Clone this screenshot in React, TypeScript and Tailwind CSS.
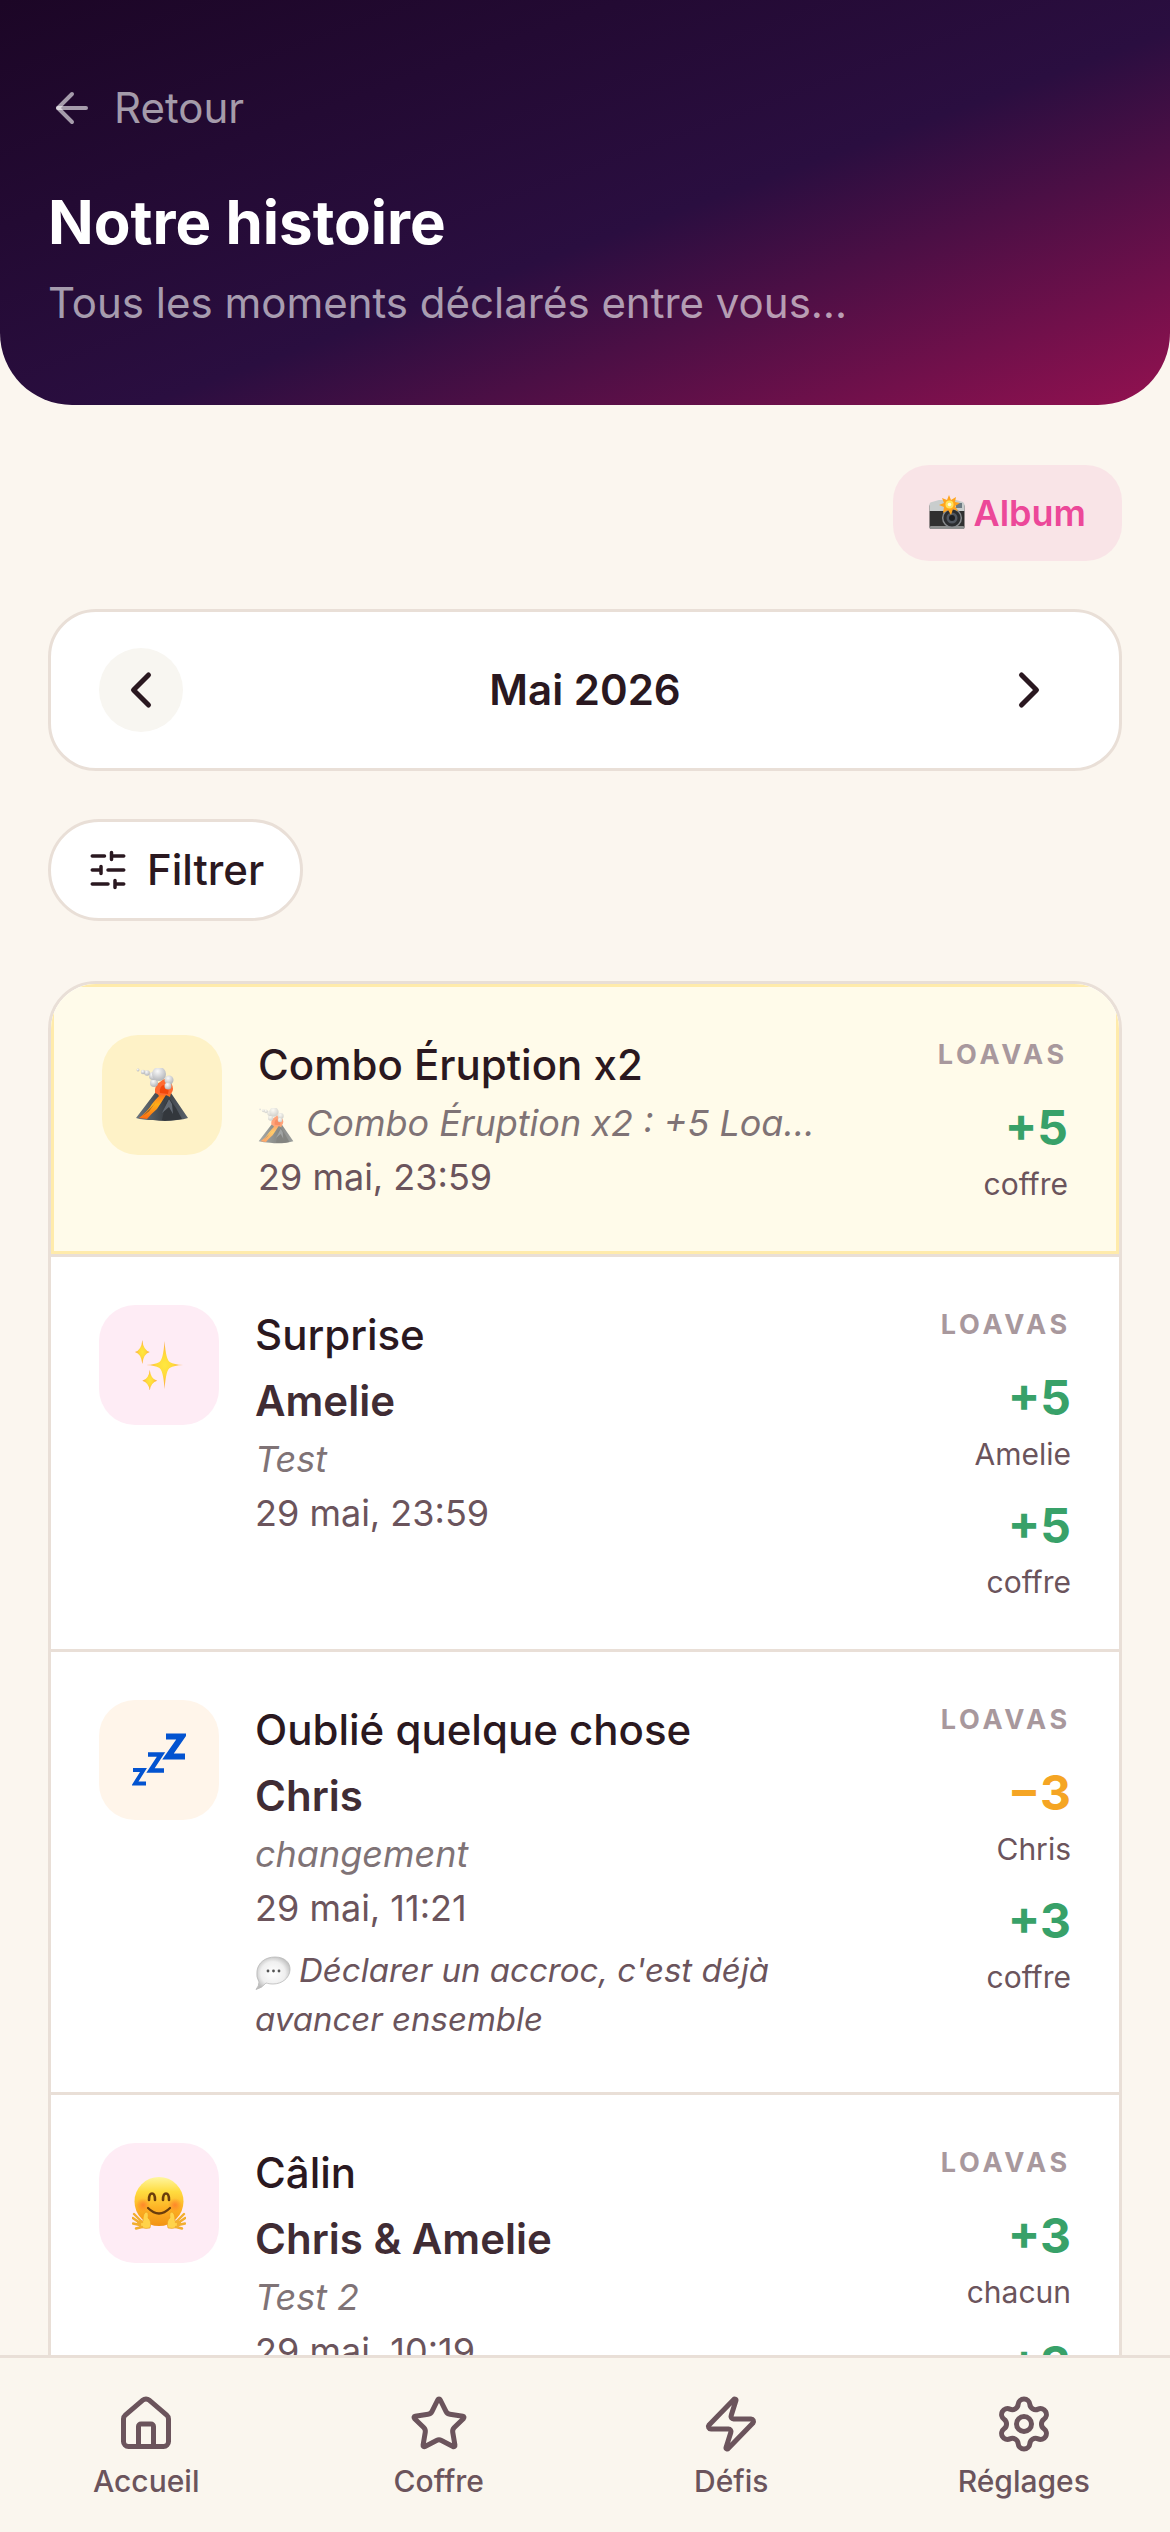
import React from 'react';
import {
  ArrowLeft,
  ChevronLeft,
  ChevronRight,
  House,
  Star,
  Zap,
  Settings
} from 'lucide-react';

interface IconProps {
  className?: string;
}

const SlidersIcon: React.FC<IconProps> = ({ className }) => (
  <svg className={className} viewBox="0 0 24 24" fill="none" stroke="currentColor" strokeWidth="2" strokeLinecap="round" aria-hidden="true">
    <path d="M21 4h-7M10 4H3M21 12h-9M8 12H3M21 20h-5M12 20H3M14 2v4M8 10v4M16 18v4" />
  </svg>
);

const VolcanoEmoji: React.FC<IconProps> = ({ className }) => (
  <svg className={className} viewBox="0 0 54 54" role="img" aria-label="Volcan">
    <defs>
      <linearGradient id="rock" x1="0" x2="1" y1="0" y2="0">
        <stop offset="0" stopColor="#6d7780" />
        <stop offset="0.55" stopColor="#3b4046" />
        <stop offset="1" stopColor="#5a626b" />
      </linearGradient>
      <linearGradient id="lava" x1="0" x2="0" y1="0" y2="1">
        <stop offset="0" stopColor="#ff5a1f" />
        <stop offset="0.5" stopColor="#ffae17" />
        <stop offset="1" stopColor="#ff6a12" />
      </linearGradient>
      <radialGradient id="smoke" cx="0.4" cy="0.3" r="0.8">
        <stop offset="0" stopColor="#fafafa" />
        <stop offset="1" stopColor="#a9abb0" />
      </radialGradient>
    </defs>
    <path d="M1 50 L20 25 Q27 21 36 25 L53 50 Q49 51.500 42 52 Q30 54 18 52 Q8 52 1 50Z" fill="url(#rock)" />
    <path d="M27 52 L31 35 L34 30 L41 40 L47 51 Q38 53 27 52Z" fill="#33373c" />
    <path d="M34 31 L27 45 L34 39 L38 46 L37 36Z" fill="#646b74" />
    <path d="M21 24 Q28 20 36 25 L35 29 L31 27 Q26 35 22 41 Q16 46 12 51 L4 50 Q13 43 17 36 Q20 32 24 28Z" fill="url(#lava)" />
    <path d="M21 34 L14 43 L8 48 L16 40Z" fill="#3b4046" />
    <path d="M20 25 Q19 17 25 14 Q32 7 36 15 Q40 21 36 26 Q28 29 20 25Z" fill="#ff6b32" />
    <path d="M25 25 Q24 17 30 17 Q35 19 33 26Z" fill="#f4470b" />
    <circle cx="19" cy="15" r="4" fill="url(#smoke)" />
    <circle cx="34" cy="12" r="4.500" fill="url(#smoke)" />
    <circle cx="33" cy="18" r="3.500" fill="url(#smoke)" />
    <circle cx="18" cy="8" r="4" fill="url(#smoke)" />
    <circle cx="24" cy="6" r="7" fill="url(#smoke)" />
    <circle cx="12" cy="5" r="2.800" fill="url(#smoke)" />
    <circle cx="8" cy="4" r="2.200" fill="url(#smoke)" />
    <circle cx="3" cy="2" r="1.400" fill="url(#smoke)" />
  </svg>
);

const SparklesEmoji: React.FC<IconProps> = ({ className }) => (
  <svg className={className} viewBox="0 0 54 54" role="img" aria-label="Étincelles">
    <defs>
      <radialGradient id="spark">
        <stop offset="0" stopColor="#ffe83f" />
        <stop offset="0.45" stopColor="#ffd93b" />
        <stop offset="1" stopColor="#fba43f" />
      </radialGradient>
    </defs>
    <path d="M33 1 Q34.500 22 39 24 Q43 26.500 53 27 Q43 27.500 39 30 Q34.500 32 33 53 Q31.500 32 27 30 Q23 27.500 13 27 Q23 26.500 27 24 Q31.500 22 33 1Z" fill="url(#spark)" />
    <path d="M9 0 Q10 11 17 13 Q10 15 9 26 Q8 15 1 13 Q8 11 9 0Z" fill="url(#spark)" />
    <path d="M17 32 Q18 42 25 44 Q18 46 17 55 Q16 46 9 44 Q16 42 17 32Z" fill="url(#spark)" />
  </svg>
);

const SleepEmoji: React.FC<IconProps> = ({ className }) => (
  <svg className={className} viewBox="0 0 54 54" fill="none" stroke="#0353d0" strokeLinejoin="miter" role="img" aria-label="Sommeil">
    <path d="M34 3.500H50L36 23.500H53" strokeWidth="6" />
    <path d="M16 21.500H29L18.500 37.500H32" strokeWidth="4.500" />
    <path d="M1 37H11.500L3 50.500H14" strokeWidth="3.800" />
  </svg>
);

const HugEmoji: React.FC<IconProps> = ({ className }) => (
  <svg className={className} viewBox="0 0 54 54" role="img" aria-label="Câlin">
    <defs>
      <linearGradient id="face" x1="0" x2="0" y1="0" y2="1">
        <stop offset="0" stopColor="#fff6a0" />
        <stop offset="0.3" stopColor="#ffdc3f" />
        <stop offset="0.65" stopColor="#fdb023" />
        <stop offset="1" stopColor="#f29314" />
      </linearGradient>
      <radialGradient id="blush">
        <stop offset="0" stopColor="#ff7a2a" stopOpacity="0.800" />
        <stop offset="1" stopColor="#ff7a2a" stopOpacity="0" />
      </radialGradient>
    </defs>
    <circle cx="27" cy="25.500" r="24.500" fill="url(#face)" />
    <circle cx="11" cy="29" r="7" fill="url(#blush)" />
    <circle cx="43" cy="29" r="7" fill="url(#blush)" />
    <path d="M17 24Q17 17.500 20 17.500T23 24M31 24Q31 17.500 34 17.500T37 24" fill="none" stroke="#6b3d0c" strokeWidth="2.600" strokeLinecap="round" />
    <path d="M16 32Q27 43 38 32" fill="none" stroke="#6b3d0c" strokeWidth="2.200" strokeLinecap="round" />
    <path d="M18 52Q9 54 5 47Q6 44 11 45Q11 37 14 36Q17 36 16 42Q20 45 18 52Z" fill="#ffd34a" stroke="#ec9a1d" strokeWidth="0.600" />
    <path d="M36 52Q45 54 49 47Q48 44 43 45Q43 37 40 36Q37 36 38 42Q34 45 36 52Z" fill="#ffd34a" stroke="#ec9a1d" strokeWidth="0.600" />
    <path d="M10 46L2 38M8 47L0.800 42M8 49L1 47.500M10 51L4 52.500M44 46L52 38M46 47L53.200 42M46 49L53 47.500M44 51L50 52.500" fill="none" stroke="#f2ae2e" strokeWidth="2.400" strokeLinecap="round" />
  </svg>
);

const SpeechEmoji: React.FC<IconProps> = ({ className }) => (
  <svg className={className} viewBox="0 0 36 36" role="img" aria-label="Message">
    <defs>
      <radialGradient id="bubble" cx="0.5" cy="0.5" r="0.55">
        <stop offset="0" stopColor="#ffffff" />
        <stop offset="0.65" stopColor="#efefef" />
        <stop offset="1" stopColor="#bdbdbd" />
      </radialGradient>
    </defs>
    <path d="M20 2C30 2 35.500 8 35 15C34.500 23 27 29 18 29C15 29 13 28.500 11 28Q7 33 1 34.500Q4 31 4 27Q1 22 2 16C3 8 10 2 20 2Z" fill="url(#bubble)" stroke="#b9b9b9" strokeWidth="0.800" />
    <circle cx="13" cy="16" r="1.400" fill="#555" />
    <circle cx="18.500" cy="16" r="1.400" fill="#555" />
    <circle cx="24" cy="16" r="1.400" fill="#555" />
  </svg>
);

const CameraEmoji: React.FC<IconProps> = ({ className }) => (
  <svg className={className} viewBox="0 0 36 36" role="img" aria-label="Appareil photo">
    <rect x="0.500" y="9" width="35" height="25" rx="2" fill="#303030" />
    <path d="M0.500 16V9Q1 7 3 7L10 5H27L34 7Q35.500 8 35.500 10V16Z" fill="#c9cdcd" />
    <rect x="0.500" y="31" width="35" height="3" rx="1.500" fill="#8d8f8f" />
    <rect x="27" y="8" width="6" height="5" fill="#6d7b83" />
    <circle cx="23" cy="23" r="10" fill="#8a8d90" />
    <circle cx="23" cy="23" r="8.600" fill="#2b2d30" />
    <circle cx="23" cy="23" r="5.500" fill="#515760" />
    <circle cx="23" cy="23" r="3" fill="#1d1f23" />
    <path d="M20 0L22 5L27 2L26 7L31 8L26 11L29 16L24 14L22 20L19 15L14 18L15 12L10 10L15 8L13 3L18 5Z" fill="#ffa51e" />
    <circle cx="20.500" cy="9.500" r="4" fill="#ffe35a" />
    <circle cx="20.500" cy="9.500" r="1.800" fill="#fffbe0" />
  </svg>
);

interface Score {
  value: string;
  owner: string;
  negative?: boolean;
}

interface Moment {
  id: number;
  title: string;
  people?: string;
  note: string;
  noteIcon?: React.ReactNode;
  date: string;
  message?: string;
  emoji: React.ReactNode;
  tileClass: string;
  scores: Score[];
  highlight?: boolean;
}

const moments: Moment[] = [
  {
    id: 1,
    title: 'Combo Éruption x2',
    note: 'Combo Éruption x2 : +5 Loa…',
    noteIcon: <VolcanoEmoji className="mr-3 inline size-[36px] opacity-60" />,
    date: '29 mai, 23:59',
    emoji: <VolcanoEmoji className="size-[54px]" />,
    tileClass: 'bg-[#fef2c7]',
    scores: [{ value: '+5', owner: 'coffre' }],
    highlight: true
  },
  {
    id: 2,
    title: 'Surprise',
    people: 'Amelie',
    note: 'Test',
    date: '29 mai, 23:59',
    emoji: <SparklesEmoji className="size-[50px]" />,
    tileClass: 'bg-[#feecf5]',
    scores: [
      { value: '+5', owner: 'Amelie' },
      { value: '+5', owner: 'coffre' }
    ]
  },
  {
    id: 3,
    title: 'Oublié quelque chose',
    people: 'Chris',
    note: 'changement',
    date: '29 mai, 11:21',
    message: "Déclarer un accroc, c'est déjà avancer ensemble",
    emoji: <SleepEmoji className="size-[54px]" />,
    tileClass: 'bg-[#fff5ea]',
    scores: [
      { value: '−3', owner: 'Chris', negative: true },
      { value: '+3', owner: 'coffre' }
    ]
  },
  {
    id: 4,
    title: 'Câlin',
    people: 'Chris & Amelie',
    note: 'Test 2',
    date: '29 mai, 10:19',
    emoji: <HugEmoji className="size-[54px]" />,
    tileClass: 'bg-[#feecf5]',
    scores: [
      { value: '+3', owner: 'chacun' },
      { value: '+3', owner: 'coffre' }
    ]
  }
];

const tabs = [
  { label: 'Accueil', Icon: House },
  { label: 'Coffre', Icon: Star },
  { label: 'Défis', Icon: Zap },
  { label: 'Réglages', Icon: Settings }
];

const MomentRow: React.FC<{ moment: Moment }> = ({ moment }) => (
  <li>
    <article
      className={`flex items-start gap-9 p-12 ${
        moment.highlight ? 'border-3 border-[#ffebab] bg-[#fffbea]' : 'bg-white'
      }`}
    >
      <div className={`flex size-[120px] shrink-0 items-center justify-center rounded-[36px] ${moment.tileClass}`}>
        {moment.emoji}
      </div>

      <div className="min-w-0 flex-1">
        <h2 className="truncate text-[42px] leading-[60px] font-medium">{moment.title}</h2>
        {moment.people && (
          <p className="mt-1.5 truncate text-[42px] leading-[60px] font-semibold text-[#402c34]">{moment.people}</p>
        )}
        <p className="mt-1 truncate text-[36px] leading-[48px] text-[#7f7376] italic">
          {moment.noteIcon}
          {moment.note}
        </p>
        <p className="mt-1.5 text-[36px] leading-[48px] text-[#6b545c]">{moment.date}</p>
        {moment.message && (
          <p className="mt-3.5 text-[33px] leading-[49px] text-[#6b545c] italic">
            <SpeechEmoji className="mr-2 inline size-[36px]" />
            {moment.message}
          </p>
        )}
      </div>

      <div className="flex min-w-[216px] shrink-0 flex-col gap-4 text-right">
        <p className="text-[27px] leading-[40px] font-bold tracking-[0.14em] text-[#a8989d]">LOAVAS</p>
        {moment.scores.map((score) => (
          <div key={score.owner}>
            <p className={`text-[48px] leading-[74px] font-bold [font-optical-sizing:none] ${score.negative ? 'text-[#f5a524]' : 'text-[#38a169]'}`}>
              {score.value}
            </p>
            <p className="text-[30px] leading-[38px] text-[#6b545c]">{score.owner}</p>
          </div>
        ))}
      </div>
    </article>
  </li>
);

const App: React.FC = () => {
  return (
    <div className="flex h-screen flex-col bg-[#fbf6ef] font-['Inter','Liberation_Sans',sans-serif] text-[#2a1820]">
      <div className="min-h-0 flex-1 overflow-y-auto [scrollbar-width:none]">
        {/* Header */}
        <header className="rounded-b-[72px] bg-[linear-gradient(160deg,#1c0626_0%,#2a0e40_55%,#931150_100%)] px-12 pt-[78px] pb-[72px]">
          <button type="button" className="flex items-center gap-[18px] text-[42px] leading-[60px] text-white/60">
            <ArrowLeft className="size-12" />
            Retour
          </button>
          <h1 className="mt-12 text-[60px] leading-[72px] font-bold text-white">Notre histoire</h1>
          <p className="mt-[15px] text-[42px] leading-[60px] text-white/60">Tous les moments déclarés entre vous…</p>
        </header>

        <main className="px-12 pt-[60px] pb-12">
          <div className="flex justify-end">
            <a href="#album" className="flex items-center gap-2 rounded-[36px] bg-[#f9e4e7] px-9 py-6 text-[36px] leading-[48px] font-semibold text-[#ec4899]">
              <CameraEmoji className="size-[36px]" />
              Album
            </a>
          </div>

          {/* Month picker */}
          <div className="mt-12 flex items-center justify-between rounded-[48px] border-3 border-[#e9dfd7] bg-white px-12 py-9">
            <button type="button" aria-label="Mois précédent" className="flex size-[84px] items-center justify-center rounded-full bg-[#f8f6f1]">
              <ChevronLeft className="size-[60px]" />
            </button>
            <span className="text-[42px] leading-[60px] font-semibold">Mai 2026</span>
            <button type="button" aria-label="Mois suivant" className="flex size-[84px] items-center justify-center rounded-full">
              <ChevronRight className="size-[60px]" />
            </button>
          </div>

          <button type="button" className="mt-12 flex items-center gap-[18px] rounded-full border-3 border-[#e9dfd7] bg-white px-9 py-[18px] text-[42px] leading-[60px] font-medium">
            <SlidersIcon className="size-[42px]" />
            Filtrer
          </button>

          {/* Moments list */}
          <ul className="mt-[60px] divide-y-3 divide-[#e9dfd7] overflow-hidden rounded-[48px] border-3 border-[#e9dfd7] bg-white">
            {moments.map((moment) => (
              <MomentRow key={moment.id} moment={moment} />
            ))}
          </ul>
        </main>
      </div>

      {/* Bottom navigation */}
      <nav className="grid shrink-0 grid-cols-4 border-t-3 border-[#e9dfd7] bg-[#faf6ee] pt-9 pb-[30px] text-[#6b545c]">
        {tabs.map(({ label, Icon }) => (
          <a key={label} href={`#${label.toLowerCase()}`} className="flex flex-col items-center gap-1.5 text-[30px] leading-[42px] font-medium">
            <Icon className="size-[60px]" />
            {label}
          </a>
        ))}
      </nav>
    </div>
  );
};

export default App;
